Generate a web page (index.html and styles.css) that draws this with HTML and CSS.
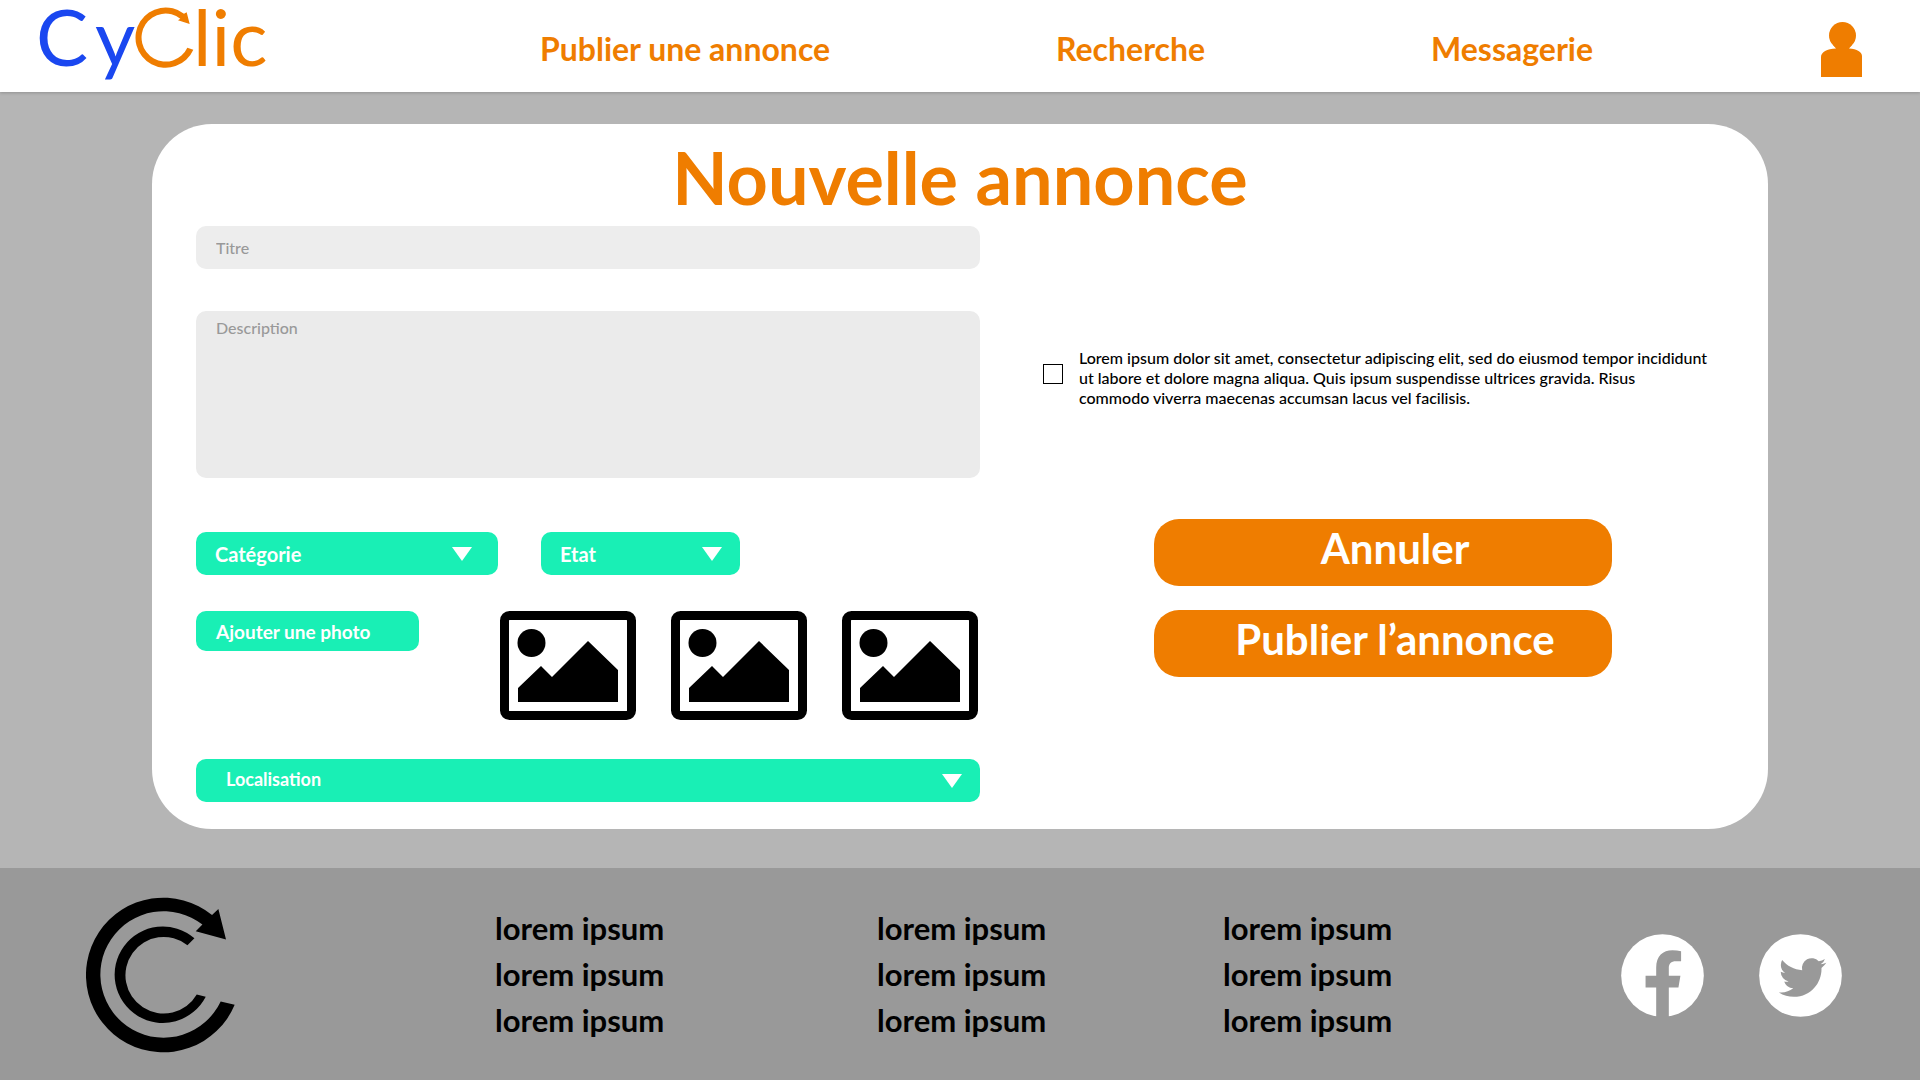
FILE: index.html
```html
<!DOCTYPE html>
<html lang="fr">
<head>
<meta charset="utf-8">
<meta name="viewport" content="width=device-width, initial-scale=1">
<title>CyClic – Nouvelle annonce</title>
<link rel="stylesheet" href="styles.css">
</head>
<body>
<svg class="sprite" aria-hidden="true">
  <symbol id="picture" viewBox="0 0 136 109">
    <rect x="4.5" y="4.5" width="127" height="100" rx="5" fill="none" stroke="currentColor" stroke-width="9"/>
    <circle cx="31.500" cy="32" r="14"/>
    <path d="M18 77 41 55 52 66 88 30 118 59V91H18Z"/>
  </symbol>
</svg>

<header class="site-header">
  <a class="brand" href="#" aria-label="CyClic, accueil">
    <svg class="brand-logo" viewBox="0 0 229 84" role="img" aria-label="CyClic">
      <text class="logo-blue" x="-3" y="66">C</text>
      <text class="logo-blue" x="56" y="66">y</text>
      <g class="logo-orange" transform="translate(-39 0) scale(.33333)">
        <path d="M552 41A90.500 90.500 0 1 0 580 149L562 143A72 72 0 1 1 541 56L534 61 569 72 560 37Z"/>
      </g>
      <text class="logo-orange" x="154" y="66">lic</text>
    </svg>
  </a>
  <a class="nav-link" href="#">Publier une annonce</a>
  <a class="nav-link" href="#">Recherche</a>
  <a class="nav-link" href="#">Messagerie</a>
  <a class="account" href="#" aria-label="Mon compte">
    <svg viewBox="0 0 41 55" width="41" height="55" aria-hidden="true">
      <circle cx="21.500" cy="13.500" r="13.500"/>
      <path d="M12 23H31L28 26.500C36 27 41 30 41 34V55H0V35C0 30 6 27 15 26.500Z"/>
    </svg>
  </a>
</header>

<main class="page">
  <form class="card">
    <h1 class="card-title">Nouvelle annonce</h1>
    <div class="card-body">
      <div class="fields">
        <input class="field" type="text" placeholder="Titre" aria-label="Titre">
        <textarea class="field field-area" placeholder="Description" aria-label="Description"></textarea>
        <div class="choices">
          <div class="dropdown">
            <select aria-label="Catégorie"><option>Catégorie</option></select>
          </div>
          <div class="dropdown dropdown-narrow">
            <select aria-label="Etat"><option>Etat</option></select>
          </div>
        </div>
        <div class="photos">
          <button class="add-photo" type="button">Ajouter une photo</button>
          <div class="thumbs">
            <svg class="thumb" aria-hidden="true"><use href="#picture"/></svg>
            <svg class="thumb" aria-hidden="true"><use href="#picture"/></svg>
            <svg class="thumb" aria-hidden="true"><use href="#picture"/></svg>
          </div>
        </div>
        <div class="dropdown dropdown-wide">
          <select aria-label="Localisation"><option>Localisation</option></select>
        </div>
      </div>
      <div class="side">
        <div class="terms">
          <input type="checkbox" id="terms">
          <label for="terms">Lorem ipsum dolor sit amet, consectetur adipiscing elit, sed do eiusmod tempor incididunt ut labore et dolore magna aliqua. Quis ipsum suspendisse ultrices gravida. Risus commodo viverra maecenas accumsan lacus vel facilisis.</label>
        </div>
        <div class="actions">
          <button class="action" type="reset">Annuler</button>
          <button class="action" type="submit">Publier l’annonce</button>
        </div>
      </div>
    </div>
  </form>
</main>

<footer class="site-footer">
  <svg class="footer-logo" viewBox="78 113 448 467" role="img" aria-label="CyClic">
    <path d="M457 166A232.500 232.500 0 1 0 525 436L483 426A190 190 0 1 1 428 195L408 215 499 240 476 148Z"/>
    <path d="M404 236A145 145 0 1 0 438 412L411 405A115 115 0 1 1 383 257Z"/>
  </svg>
  <ul class="footer-links">
    <li><a href="#">lorem ipsum</a></li>
    <li><a href="#">lorem ipsum</a></li>
    <li><a href="#">lorem ipsum</a></li>
  </ul>
  <ul class="footer-links">
    <li><a href="#">lorem ipsum</a></li>
    <li><a href="#">lorem ipsum</a></li>
    <li><a href="#">lorem ipsum</a></li>
  </ul>
  <ul class="footer-links">
    <li><a href="#">lorem ipsum</a></li>
    <li><a href="#">lorem ipsum</a></li>
    <li><a href="#">lorem ipsum</a></li>
  </ul>
  <div class="social">
    <a href="#" aria-label="Facebook">
      <svg viewBox="92 104 250 250" width="83" height="83" aria-hidden="true">
        <circle class="disc" cx="217" cy="229" r="124.500"/>
        <path class="mark" d="M198 356V265H166V230H198V205C198 170 218 153 247 153 256 153 265 154 273 156V186H258C242 186 236 194 236 206V230H271L265 265H236V356Z"/>
      </svg>
    </a>
    <a href="#" aria-label="Twitter">
      <svg viewBox="506 104 250 250" width="83" height="83" aria-hidden="true">
        <circle class="disc" cx="631" cy="229" r="124.500"/>
        <path class="mark" transform="translate(566 163.600) scale(5.950)" d="M23.953 4.57a10 10 0 01-2.825.775 4.958 4.958 0 002.163-2.723c-.951.555-2.005.959-3.127 1.184a4.92 4.92 0 00-8.384 4.482C7.69 8.095 4.067 6.13 1.64 3.162a4.822 4.822 0 00-.666 2.475c0 1.71.87 3.213 2.188 4.096a4.904 4.904 0 01-2.228-.616v.06a4.923 4.923 0 003.946 4.827 4.996 4.996 0 01-2.212.085 4.936 4.936 0 004.604 3.417 9.867 9.867 0 01-6.102 2.105c-.39 0-.779-.023-1.17-.067a13.995 13.995 0 007.557 2.209c9.053 0 13.998-7.496 13.998-13.985 0-.21 0-.42-.015-.63A9.935 9.935 0 0024 4.59z"/>
      </svg>
    </a>
  </div>
</footer>
</body>
</html>
```
FILE: styles.css
```css
:root {
  --orange: #ef7d00;
  --blue: #1a47f0;
  --mint: #19efb5;
}

* { box-sizing: border-box; }

body {
  margin: 0;
  min-height: 100vh;
  display: flex;
  flex-direction: column;
  background: #b5b5b5;
  color: #000;
  font-family: Lato, "Open Sans", sans-serif;
}

a { color: inherit; text-decoration: none; }
button, input, textarea, select { font: inherit; border: 0; margin: 0; }
.sprite { display: none; }

/* Header */
.site-header {
  position: relative;
  min-height: 92px;
  padding: 0 58px 0 39px;
  display: grid;
  grid-template-columns: 501fr 516fr 375fr 390fr auto;
  align-items: center;
  background: #fff;
  box-shadow: 0 1px 3px rgba(0, 0, 0, .2);
}
.brand { align-self: start; }
.brand-logo {
  display: block;
  width: 229px;
  height: 84px;
  overflow: visible;
  font-size: 78px;
}
.logo-blue { fill: var(--blue); }
.logo-orange { fill: var(--orange); }
.nav-link {
  padding-top: 6px;
  color: var(--orange);
  font-size: 32px;
  line-height: 40px;
  font-weight: 700;
}
.account { padding-top: 6px; }
.account svg { display: block; fill: var(--orange); }

/* Card */
.page { padding: 32px 152px 39px; }
.card {
  padding: 4px 58px 27px 44px;
  border-radius: 60px;
  background: #fff;
}
.card-title {
  margin: 0 -14px 0 0;
  color: var(--orange);
  font-size: 72px;
  line-height: 98px;
  text-align: center;
}
.card-body {
  display: grid;
  grid-template-columns: 784fr 667fr;
  column-gap: 63px;
}
.fields { display: flex; flex-direction: column; }
.field {
  width: 100%;
  height: 43px;
  padding: 0 20px;
  border-radius: 10px;
  background: #ededed;
  font-size: 16px;
  font-weight: 500;
}
.field::placeholder { color: #999; opacity: 1; }
.field-area {
  display: block;
  height: 167px;
  margin: 42px 0 54px;
  padding: 7px 20px;
  background: #ebebeb;
  line-height: 20px;
  resize: none;
}
.choices { display: flex; gap: 43px; }
.dropdown {
  width: 302px;
  display: grid;
  align-items: center;
}
.dropdown-narrow { width: 199px; }
.dropdown-wide { width: 100%; }
.dropdown select {
  grid-area: 1 / 1;
  width: 100%;
  height: 43px;
  padding: 0 48px 0 19px;
  border-radius: 10px;
  appearance: none;
  background: var(--mint);
  color: #fff;
  font-size: 20px;
  font-weight: 700;
}
.dropdown-wide select { padding: 0 48px 3px 30px; font-size: 18px; }
.dropdown::after {
  content: "";
  grid-area: 1 / 1;
  justify-self: end;
  margin-right: 18px;
  border: 10px solid transparent;
  border-top: 14px solid #fff;
  border-bottom: 0;
  pointer-events: none;
}
.choices .dropdown:first-child::after { margin-right: 26px; }
.photos {
  margin: 36px 0 39px;
  padding-right: 2px;
  display: flex;
  justify-content: space-between;
  align-items: flex-start;
}
.add-photo {
  width: 223px;
  height: 40px;
  padding: 0 20px;
  border-radius: 10px;
  background: var(--mint);
  color: #fff;
  font-size: 19px;
  font-weight: 700;
  text-align: left;
}
.thumbs { display: flex; gap: 35px; }
.thumb { width: 136px; height: 109px; }

/* Consent and actions */
.side { padding-top: 122px; }
.terms {
  padding-right: 2px;
  display: flex;
  gap: 16px;
}
.terms input {
  flex: none;
  width: 20px;
  height: 20px;
  margin-top: 16px;
  border: 1px solid #000;
  appearance: none;
}
.terms input:checked { background: var(--orange); }
.terms label { font-size: 16px; line-height: 20px; font-weight: 500; }
.actions {
  margin: 111px 98px 0 111px;
  display: flex;
  flex-direction: column;
  gap: 24px;
}
.action {
  height: 67px;
  padding: 0 0 8px 24px;
  border-radius: 25px;
  background: var(--orange);
  color: #fff;
  font-size: 42px;
  line-height: 59px;
  font-weight: 700;
}

/* Footer */
.site-footer {
  flex: 1;
  padding: 28px 78px 26px 86px;
  display: grid;
  grid-template-columns: 409fr 382fr 346fr 398fr auto;
  align-items: center;
  background: #999;
}
.footer-logo { width: 149px; height: 156px; }
.footer-links {
  margin: 0;
  padding: 0 0 2px;
  list-style: none;
  font-size: 31px;
  line-height: 46px;
  font-weight: 700;
}
.social { display: flex; gap: 55px; }
.social svg { display: block; }
.disc { fill: #fff; }
.mark { fill: #999; }
```
